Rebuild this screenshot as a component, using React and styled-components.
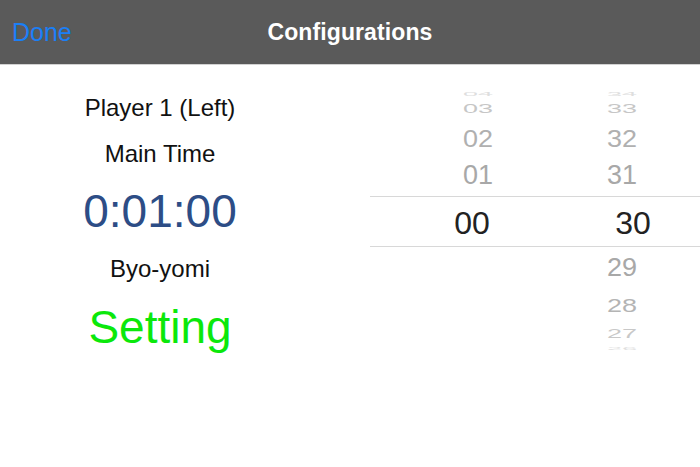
import React from 'react';
import styled, { createGlobalStyle } from 'styled-components';

const GlobalStyle = createGlobalStyle`
  html, body {
    margin: 0;
    padding: 0;
    background: #ffffff;
  }

  body {
    font-family: 'Liberation Sans', Arial, sans-serif;
    width: 700px;
    height: 467px;
    overflow: hidden;
  }
`;

const Screen = styled.div`
  width: 700px;
  height: 467px;
  display: flex;
  flex-direction: column;
  background: #ffffff;
`;

const NavBar = styled.header`
  height: 64px;
  flex: none;
  background: #5a5a5a;
  border-bottom: 1px solid #d2d2d2;
  display: grid;
  grid-template-columns: 1fr auto 1fr;
  align-items: center;
  padding: 0 12px;
`;

const DoneButton = styled.button`
  justify-self: start;
  background: none;
  border: none;
  padding: 0;
  font-family: inherit;
  font-size: 25px;
  line-height: 30px;
  color: #1a7ff7;
  cursor: pointer;
`;

const Title = styled.h1`
  margin: 0;
  font-size: 23px;
  font-weight: 700;
  line-height: 30px;
  color: #ffffff;
  letter-spacing: 0.1px;
`;

const Body = styled.main`
  flex: 1;
  display: flex;
`;

const Summary = styled.section`
  width: 320px;
  display: flex;
  flex-direction: column;
  align-items: center;
  padding-top: 28px;
`;

const Label = styled.div`
  font-size: ${p => (p.$big ? 46 : 24)}px;
  line-height: ${p => (p.$big ? 56 : 30)}px;
  margin-top: ${p => p.$gap || 0}px;
  color: ${p => p.$color || '#111111'};
  white-space: nowrap;
`;

const Picker = styled.section`
  flex: 1;
  margin-left: 50px;
  display: flex;
  flex-direction: column;
`;

const Wheel = styled.div`
  display: grid;
  grid-template-columns: 216px 72px;
  align-items: end;
  height: ${p => p.$height}px;
  padding-bottom: ${p => p.$pad || 0}px;
  box-sizing: border-box;
  align-content: ${p => (p.$top ? 'end' : 'start')};
`;

const Column = styled.div`
  display: flex;
  flex-direction: column;
  align-items: center;
`;

const Item = styled.div`
  height: ${p => p.$h}px;
  line-height: ${p => p.$h}px;
  font-size: 27px;
  color: ${p => p.$shade};
  transform: scaleY(${p => p.$scale});
  white-space: nowrap;
`;

const Band = styled.div`
  display: grid;
  grid-template-columns: 216px 72px;
  height: 51px;
  box-sizing: border-box;
  border-top: 1px solid #d8d8d8;
  border-bottom: 1px solid #d8d8d8;
  padding-top: 3px;
`;

const Selected = styled.div`
  justify-self: center;
  font-size: 32px;
  line-height: 46px;
  color: #222222;
  transform: translateX(${p => p.$shift}px);
`;

const upper = [
  { h: 13, scale: 0.2, shade: '#dedede' },
  { h: 16, scale: 0.45, shade: '#c6c6c6' },
  { h: 44, scale: 0.9, shade: '#b0b0b0' },
  { h: 28, scale: 1, shade: '#a8a8a8' }
];

const lower = [
  { h: 40, scale: 0.95, shade: '#a8a8a8' },
  { h: 38, scale: 0.65, shade: '#b4b4b4' },
  { h: 18, scale: 0.45, shade: '#c8c8c8' },
  { h: 11, scale: 0.15, shade: '#e0e0e0' }
];

const hoursAbove = ['04', '03', '02', '01'];
const secondsAbove = ['34', '33', '32', '31'];
const secondsBelow = ['29', '28', '27', '26'];

// turn row settings into transient props
const prefix = row => ({ $h: row.h, $scale: row.scale, $shade: row.shade });

const App = () => {
  return (
    <>
      <GlobalStyle />
      <Screen>
        <NavBar>
          <DoneButton>Done</DoneButton>
          <Title>Configurations</Title>
          <span />
        </NavBar>

        <Body>
          <Summary>
            <Label>Player 1 (Left)</Label>
            <Label $gap={16}>Main Time</Label>
            <Label $big $gap={14} $color="#2d4d86">
              0:01:00
            </Label>
            <Label $gap={15}>Byo-yomi</Label>
            <Label $big $gap={15} $color="#0be80b">
              Setting
            </Label>
          </Summary>

          <Picker>
            <Wheel $height={131} $pad={7} $top>
              <Column>
                {hoursAbove.map((v, i) => (
                  <Item key={v} {...prefix(upper[i])}>
                    {v}
                  </Item>
                ))}
              </Column>
              <Column>
                {secondsAbove.map((v, i) => (
                  <Item key={v} {...prefix(upper[i])}>
                    {v}
                  </Item>
                ))}
              </Column>
            </Wheel>

            <Band>
              <Selected $shift={-6}>00</Selected>
              <Selected $shift={11}>30</Selected>
            </Band>

            <Wheel $height={120}>
              <Column />
              <Column>
                {secondsBelow.map((v, i) => (
                  <Item key={v} {...prefix(lower[i])}>
                    {v}
                  </Item>
                ))}
              </Column>
            </Wheel>
          </Picker>
        </Body>
      </Screen>
    </>
  );
};

export default App;
